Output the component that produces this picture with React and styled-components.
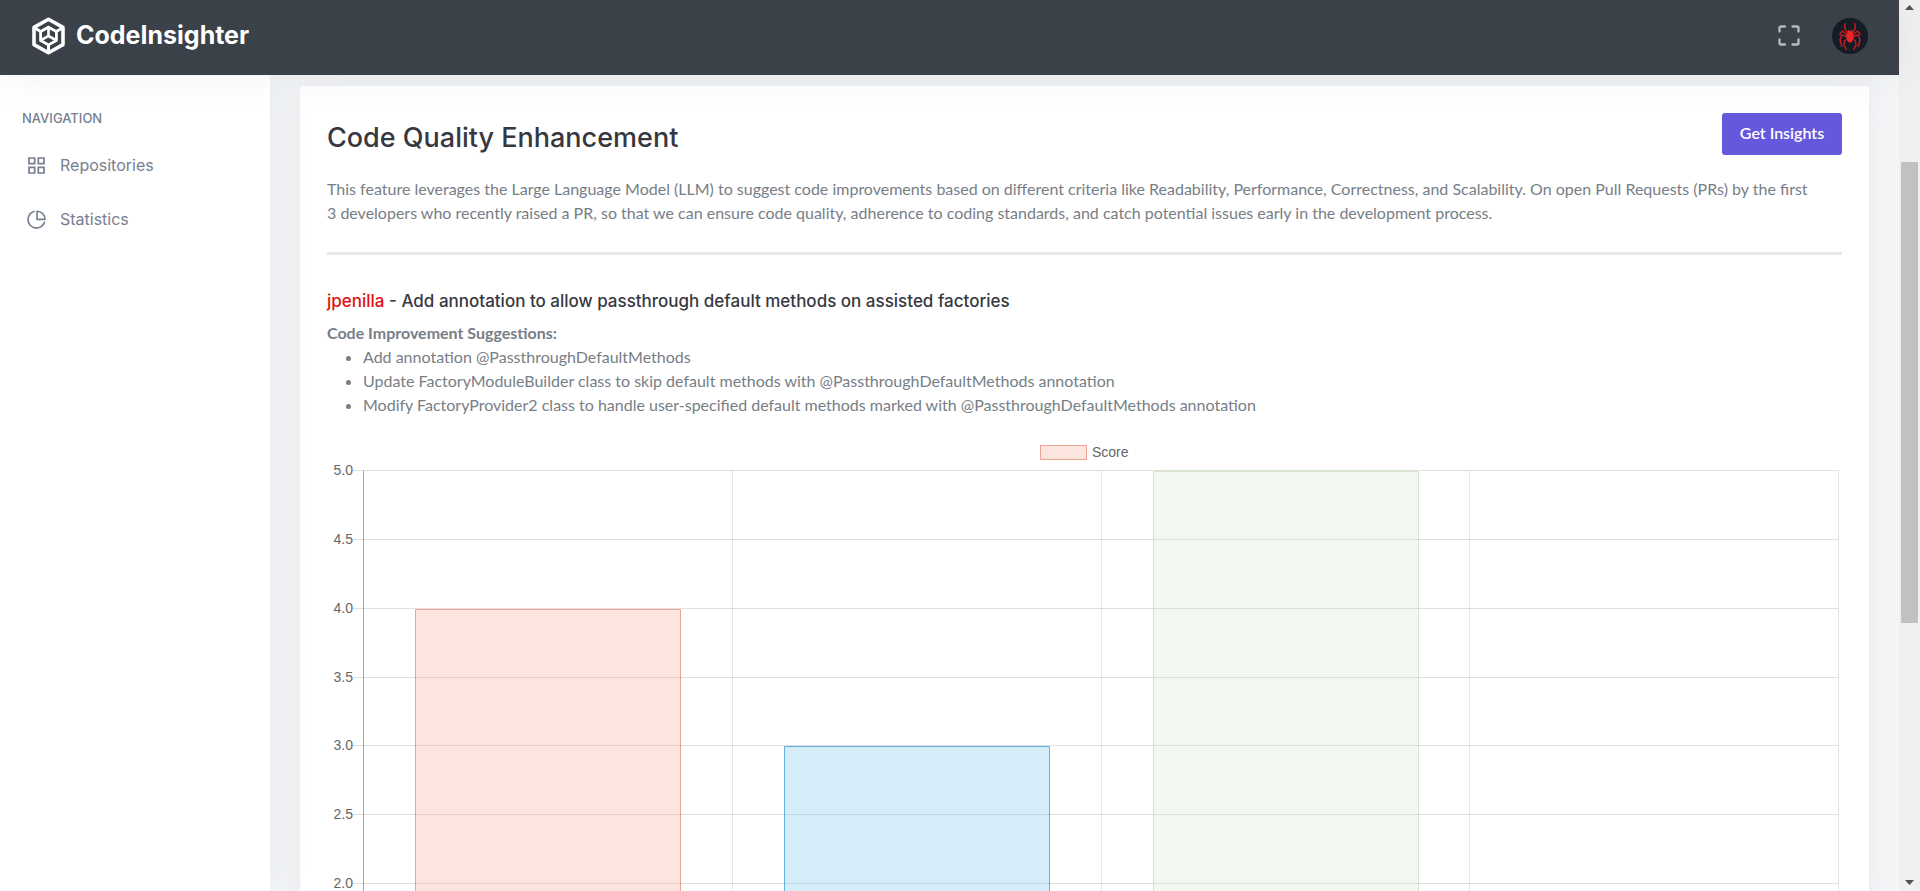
import React from "react";
import styled, { createGlobalStyle } from "styled-components";

const body = '"Lato", "Liberation Sans", sans-serif';
const display = '"Inter", "Liberation Sans", sans-serif';
const softShadow = "0 0 35px rgba(154, 161, 171, 0.15)";

const GlobalStyle = createGlobalStyle`
  *, *::before, *::after { box-sizing: border-box; }
  body {
    margin: 0;
    background: #f5f6f8;
    color: #777e86;
    font-family: ${body};
    font-size: 16px;
    line-height: 24px;
  }
`;

const Frame = styled.div`
  display: flex;
  height: 100vh;
  overflow: hidden;
`;

const Page = styled.div`
  flex: 1;
  min-width: 0;
  display: flex;
  flex-direction: column;
`;

const Topbar = styled.header`
  position: relative;
  z-index: 2;
  flex: none;
  display: flex;
  align-items: center;
  justify-content: space-between;
  height: 75px;
  padding: 0 31px 3px;
  background: #3a4149;
  box-shadow: ${softShadow};
`;

const Brand = styled.a`
  display: flex;
  align-items: center;
  gap: 10px;
  color: #fff;
  font-family: ${display};
  font-size: 25px;
  font-weight: 700;
  line-height: 32px;
  text-decoration: none;
`;

const BrandName = styled.span`
  padding-bottom: 2px;
`;

const TopActions = styled.div`
  display: flex;
  align-items: center;
  gap: 32px;
`;

const IconButton = styled.button`
  display: flex;
  padding: 0;
  border: 0;
  border-radius: 50%;
  background: none;
  color: #b4bac0;
  cursor: pointer;
`;

const Columns = styled.div`
  flex: 1;
  min-height: 0;
  display: flex;
`;

const Sidebar = styled.nav`
  position: relative;
  z-index: 1;
  flex: none;
  width: 270px;
  padding: 31px 22px;
  background: #fff;
  box-shadow: ${softShadow};
`;

const NavTitle = styled.h2`
  margin: 0 0 20px;
  color: #777e92;
  font-family: ${display};
  font-size: 13px;
  font-weight: 500;
  line-height: 24px;
  text-transform: uppercase;
`;

const NavList = styled.ul`
  display: flex;
  flex-direction: column;
  gap: 24px;
  margin: 0;
  padding: 0 5px;
  list-style: none;
`;

const NavLink = styled.a`
  display: flex;
  align-items: center;
  gap: 14px;
  color: #777e92;
  font-family: ${display};
  font-size: 16px;
  line-height: 30px;
  text-decoration: none;
`;

const Main = styled.main`
  flex: 1;
  min-width: 0;
  padding: 11px 30px 0;
`;

const Card = styled.section`
  min-height: 100%;
  padding: 27px;
  border-radius: 4px;
  background: #fff;
  box-shadow: ${softShadow};
`;

const CardHeader = styled.div`
  display: flex;
  align-items: flex-start;
  justify-content: space-between;
  margin-bottom: 14px;
`;

const Title = styled.h1`
  margin: 0;
  color: #37383f;
  font-family: ${display};
  font-size: 27px;
  font-weight: 500;
  line-height: 50px;
`;

const PrimaryButton = styled.button`
  width: 120px;
  height: 42px;
  padding: 0 0 3px;
  border: 0;
  border-radius: 3px;
  background: #6658dd;
  color: #fff;
  font-family: ${body};
  font-size: 16px;
  font-weight: 600;
  cursor: pointer;
`;

const Intro = styled.p`
  margin: 0;
`;

const Divider = styled.hr`
  height: 3px;
  margin: 27px 0 34px;
  border: 0;
  background: #e5e7ea;
`;

const PullTitle = styled.h2`
  margin: 0 0 8px;
  color: #37383f;
  font-family: ${display};
  font-size: 17px;
  font-weight: 500;
  line-height: 24px;
`;

const Author = styled.span`
  color: #e01010;
`;

const SuggestionsTitle = styled.h3`
  margin: 0;
  font-size: 16px;
  font-weight: 700;
  line-height: 24px;
`;

const Suggestions = styled.ul`
  margin: 0 0 16px;
  padding-left: 36px;
`;

const Chart = styled.svg`
  display: block;
  width: 100%;
  height: auto;
  fill: #666;
  font-family: "Liberation Sans", sans-serif;
  font-size: 14px;
`;

const ScrollTrack = styled.div`
  flex: none;
  display: flex;
  flex-direction: column;
  align-items: center;
  justify-content: space-between;
  width: 21px;
  padding: 5px 0 6px;
  background: #f0f0f0;
`;

const ScrollLane = styled.div`
  flex: 1;
  width: 17px;
  margin: 7px 0;
  display: grid;
  grid-template-rows: 145fr 461fr 250fr;
`;

const ScrollThumb = styled.div`
  grid-row: 2;
  background: #c1c1c1;
`;

const LogoMark = () => (
  <svg width="35" height="38" viewBox="0 0 35 38" fill="none" stroke="#fff" aria-hidden="true">
    <path strokeWidth="3.6" strokeLinejoin="round" d="M17.5 2.2 32 10.4V27.6L17.5 35.8 3 27.6V10.4Z" />
    <path strokeWidth="2.8" d="M17.5 10.2 25.4 14.6V23.4L17.5 27.9 9.6 23.4V14.6Z" />
    <path strokeWidth="2.6" d="M17.5 10.5V19L10 23.2M17.5 19 25 23.2" />
    <path strokeWidth="3" d="M3 10.4 9.6 14.6M32 10.4 25.4 14.6M17.5 28V35.5" />
  </svg>
);

const FullscreenIcon = () => (
  <svg width="22" height="22" viewBox="0 0 22 22" fill="none" stroke="currentColor" strokeWidth="2.3" strokeLinecap="round" strokeLinejoin="round" aria-hidden="true">
    <path d="M1.5 6.5V3Q1.5 1.5 3 1.5H7M14.5 1.5H19Q20.5 1.5 20.5 3V6.5M20.5 14.5V18Q20.5 19.5 19 19.5H14.5M7 19.5H3Q1.5 19.5 1.5 18V14.5" />
  </svg>
);

const Avatar = () => (
  <svg width="36" height="36" viewBox="0 0 36 36" fill="none" aria-hidden="true">
    <circle cx="18" cy="18" r="18" fill="#141c26" />
    <g stroke="#c81c1e" strokeWidth="1.4" strokeLinejoin="round">
      <path d="M16 15 13.5 12 12.5 8.5 13.5 5M20 15 22.5 12 23.5 8.5 22.5 5" />
      <path d="M15.5 17 10.5 13 7.5 16.5M20.5 17 25.5 13 28.5 16.5" />
      <path d="M15.5 18.5 9.5 17 8 22 10 29M20.5 18.5 26.5 17 28 22 26 29" />
      <path d="M16 20.5 12.5 23 12 27 14.5 32M20 20.5 23.5 23 24 27 21.5 32" />
    </g>
    <path fill="#f02626" d="M16.5 11.5 18 13.5 19.5 11.5 20.5 15 22 18.5 20.5 23 18 25 15.5 23 14 18.5 15.5 15Z" />
  </svg>
);

const GridIcon = () => (
  <svg width="19" height="19" viewBox="0 0 19 19" fill="none" stroke="currentColor" strokeWidth="1.7" aria-hidden="true">
    <path d="M2 2H7.7V7.7H2ZM11.3 2H17V7.7H11.3ZM2 11.3H7.7V17H2ZM11.3 11.3H17V17H11.3Z" />
  </svg>
);

const PieIcon = () => (
  <svg width="19" height="19" viewBox="0 0 19 19" fill="none" stroke="currentColor" strokeWidth="1.6" strokeLinecap="round" strokeLinejoin="round" aria-hidden="true">
    <path d="M7 1.6A8.4 8.4 0 1 0 17.4 12.2" />
    <path d="M10 1.2V9.4H18A8.2 8.2 0 0 0 10 1.2Z" />
  </svg>
);

const Arrow = ({ down }) => (
  <svg width="9" height="5" viewBox="0 0 9 5" fill="#505050" aria-hidden="true">
    <path d={down ? "M0 0H9L4.5 5Z" : "M0 5H9L4.5 0Z"} />
  </svg>
);

const navItems = [
  { label: "Repositories", Icon: GridIcon },
  { label: "Statistics", Icon: PieIcon },
];

const suggestions = [
  "Add annotation @PassthroughDefaultMethods",
  "Update FactoryModuleBuilder class to skip default methods with @PassthroughDefaultMethods annotation",
  "Modify FactoryProvider2 class to handle user-specified default methods marked with @PassthroughDefaultMethods annotation",
];

const scores = [
  { value: 4, fill: "rgba(240,125,95,.2)", line: "rgba(224,100,66,.55)" },
  { value: 3, fill: "rgba(45,165,225,.2)", line: "rgba(40,150,205,.7)" },
  { value: 5, fill: "rgba(195,220,185,.2)", line: "rgba(165,205,150,.45)" },
];

const ticks = [5, 4.5, 4, 3.5, 3, 2.5, 2];
const plot = { left: 36.5, right: 1511.5, top: 37.5, bottom: 458, unit: 137.7 };
const columnWidth = (plot.right - plot.left) / 4;
const yOf = (value) => Math.floor(plot.top + (5 - value) * plot.unit) + 0.5;

function ScoreChart() {
  return (
    <Chart viewBox="0 0 1515 458" role="img" aria-label="Score by criterion">
      <rect x="713.5" y="12.5" width="46" height="14" fill={scores[0].fill} stroke={scores[0].line} />
      <text x="765" y="24">Score</text>
      {ticks.map((t) => (
        <g key={t}>
          <path d={`M26 ${yOf(t)}H${plot.right}`} stroke="rgba(0,0,0,.12)" />
          <text x="26" y={yOf(t) + 4.5} textAnchor="end">{t.toFixed(1)}</text>
        </g>
      ))}
      {[0, 1, 2, 3, 4].map((i) => (
        <path
          key={i}
          d={`M${Math.floor(plot.left + i * columnWidth) + 0.5} ${plot.top}V${plot.bottom}`}
          stroke={i === 0 ? "rgba(0,0,0,.35)" : "rgba(0,0,0,.1)"}
        />
      ))}
      {scores.map(({ value, fill, line }, i) => {
        const x = Math.floor(plot.left + i * columnWidth + 52) + 0.5;
        const y = yOf(value) + 1;
        return (
          <path
            key={value}
            d={`M${x} ${plot.bottom}V${y}H${x + 265}V${plot.bottom}`}
            fill={fill}
            stroke={line}
          />
        );
      })}
    </Chart>
  );
}

export default function App() {
  return (
    <Frame>
      <GlobalStyle />
      <Page>
        <Topbar>
          <Brand href="#">
            <LogoMark />
            <BrandName>CodeInsighter</BrandName>
          </Brand>
          <TopActions>
            <IconButton type="button" aria-label="Full screen"><FullscreenIcon /></IconButton>
            <IconButton type="button" aria-label="Account"><Avatar /></IconButton>
          </TopActions>
        </Topbar>
        <Columns>
          <Sidebar>
            <NavTitle>Navigation</NavTitle>
            <NavList>
              {navItems.map(({ label, Icon }) => (
                <li key={label}>
                  <NavLink href="#"><Icon />{label}</NavLink>
                </li>
              ))}
            </NavList>
          </Sidebar>
          <Main>
            <Card>
              <CardHeader>
                <Title>Code Quality Enhancement</Title>
                <PrimaryButton type="button">Get Insights</PrimaryButton>
              </CardHeader>
              <Intro>
                This feature leverages the Large Language Model (LLM) to suggest code improvements based on
                different criteria like Readability, Performance, Correctness, and Scalability. On open Pull
                Requests (PRs) by the first 3&nbsp;developers who recently raised a PR, so that we can ensure
                code quality, adherence to coding standards, and catch potential issues early in the
                development process.
              </Intro>
              <Divider />
              <PullTitle>
                <Author>jpenilla</Author> - Add annotation to allow passthrough default methods on assisted factories
              </PullTitle>
              <SuggestionsTitle>Code Improvement Suggestions:</SuggestionsTitle>
              <Suggestions>
                {suggestions.map((s) => <li key={s}>{s}</li>)}
              </Suggestions>
              <ScoreChart />
            </Card>
          </Main>
        </Columns>
      </Page>
      <ScrollTrack aria-hidden="true">
        <Arrow />
        <ScrollLane><ScrollThumb /></ScrollLane>
        <Arrow down />
      </ScrollTrack>
    </Frame>
  );
}
